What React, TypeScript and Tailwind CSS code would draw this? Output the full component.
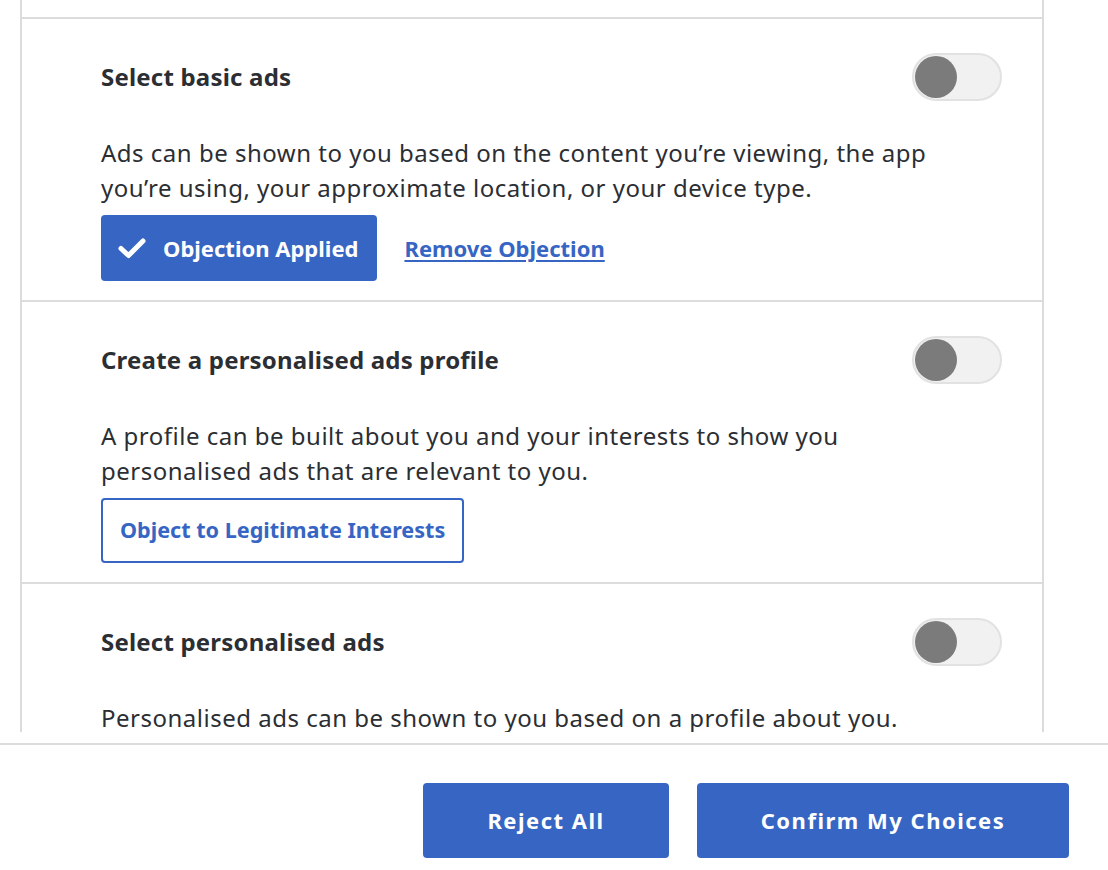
import { useState } from "react";

type Purpose = {
  id: string;
  title: string;
  body: string;
  objected?: boolean;
};

const PURPOSES: Purpose[] = [
  {
    id: "basic",
    title: "Select basic ads",
    body: "Ads can be shown to you based on the content you’re viewing, the app you’re using, your approximate location, or your device type.",
    objected: true,
  },
  {
    id: "profile",
    title: "Create a personalised ads profile",
    body: "A profile can be built about you and your interests to show you personalised ads that are relevant to you.",
  },
  {
    id: "personalised",
    title: "Select personalised ads",
    body: "Personalised ads can be shown to you based on a profile about you.",
  },
];

function Toggle({ on, onChange }: { on: boolean; onChange: (v: boolean) => void }) {
  return (
    <button
      role="switch"
      aria-checked={on}
      onClick={() => onChange(!on)}
      className="flex h-[48px] w-[90px] shrink-0 items-center rounded-full border-2 border-[#e2e2e2] bg-[#f1f1f1] px-[1px]"
    >
      <span className="block h-[42px] w-[42px] rounded-full bg-[#7b7b7b]" />
    </button>
  );
}

function CheckMark() {
  return (
    <svg viewBox="0 0 28 22" className="h-[22px] w-[28px]" fill="none">
      <path d="M3 11.5 L10.5 18.5 L25 4" stroke="white" strokeWidth="5" strokeLinecap="round" strokeLinejoin="round" />
    </svg>
  );
}

function PurposeRow({ p }: { p: Purpose }) {
  const [on, setOn] = useState(false);
  const [objected, setObjected] = useState(!!p.objected);

  return (
    <div className="border-b-2 border-[#dcdcdc] pl-[79px] pr-[40px] pt-[34px] pb-[19px]">
      <div className="flex h-[48px] items-center justify-between">
        <h3 className="text-[24px] font-bold tracking-[0.2px] text-[#2b2e33]">{p.title}</h3>
        <Toggle on={on} onChange={setOn} />
      </div>
      <p className="mt-[34px] max-w-[860px] text-[24px] leading-[35px] tracking-[0.5px] text-[#2b2e33]">{p.body}</p>
      {p.id !== "personalised" && (
        <div className="mt-[10px] flex items-center gap-[27px]">
          {objected ? (
            <>
              <button
                onClick={() => setObjected(false)}
                className="flex h-[66px] items-center gap-[17px] rounded-[4px] bg-[#3665c3] pl-[17px] pr-[19px] text-[22px] font-bold text-white"
              >
                <CheckMark />
                Objection Applied
              </button>
              <button
                onClick={() => setObjected(false)}
                className="text-[22px] font-bold text-[#3665c3] underline underline-offset-[3px]"
              >
                Remove Objection
              </button>
            </>
          ) : (
            <button
              onClick={() => setObjected(true)}
              className="h-[65px] rounded-[4px] border-2 border-[#3665c3] px-[17px] text-[21.6px] font-bold text-[#3665c3]"
            >
              Object to Legitimate Interests
            </button>
          )}
        </div>
      )}
    </div>
  );
}

export default function App() {
  return (
    <div className="h-[870px] w-full overflow-hidden bg-white font-['Noto_Sans',sans-serif]">
      <div className="h-[732px] overflow-hidden pl-[20px] pr-[64px]">
        <div className="border-x-2 border-[#dcdcdc]">
          <div className="h-[19px] border-b-2 border-[#dcdcdc]" />
          {PURPOSES.map((p) => (
            <PurposeRow key={p.id} p={p} />
          ))}
        </div>
      </div>
      <div className="mt-[11px] flex justify-end gap-[28px] border-t-2 border-[#dcdcdc] pr-[39px] pt-[38px]">
        <button className="h-[75px] w-[246px] rounded-[4px] bg-[#3665c3] text-[22px] font-bold tracking-[1.5px] text-white">
          Reject All
        </button>
        <button className="h-[75px] w-[372px] rounded-[4px] bg-[#3665c3] text-[22px] font-bold tracking-[1.5px] text-white">
          Confirm My Choices
        </button>
      </div>
    </div>
  );
}
